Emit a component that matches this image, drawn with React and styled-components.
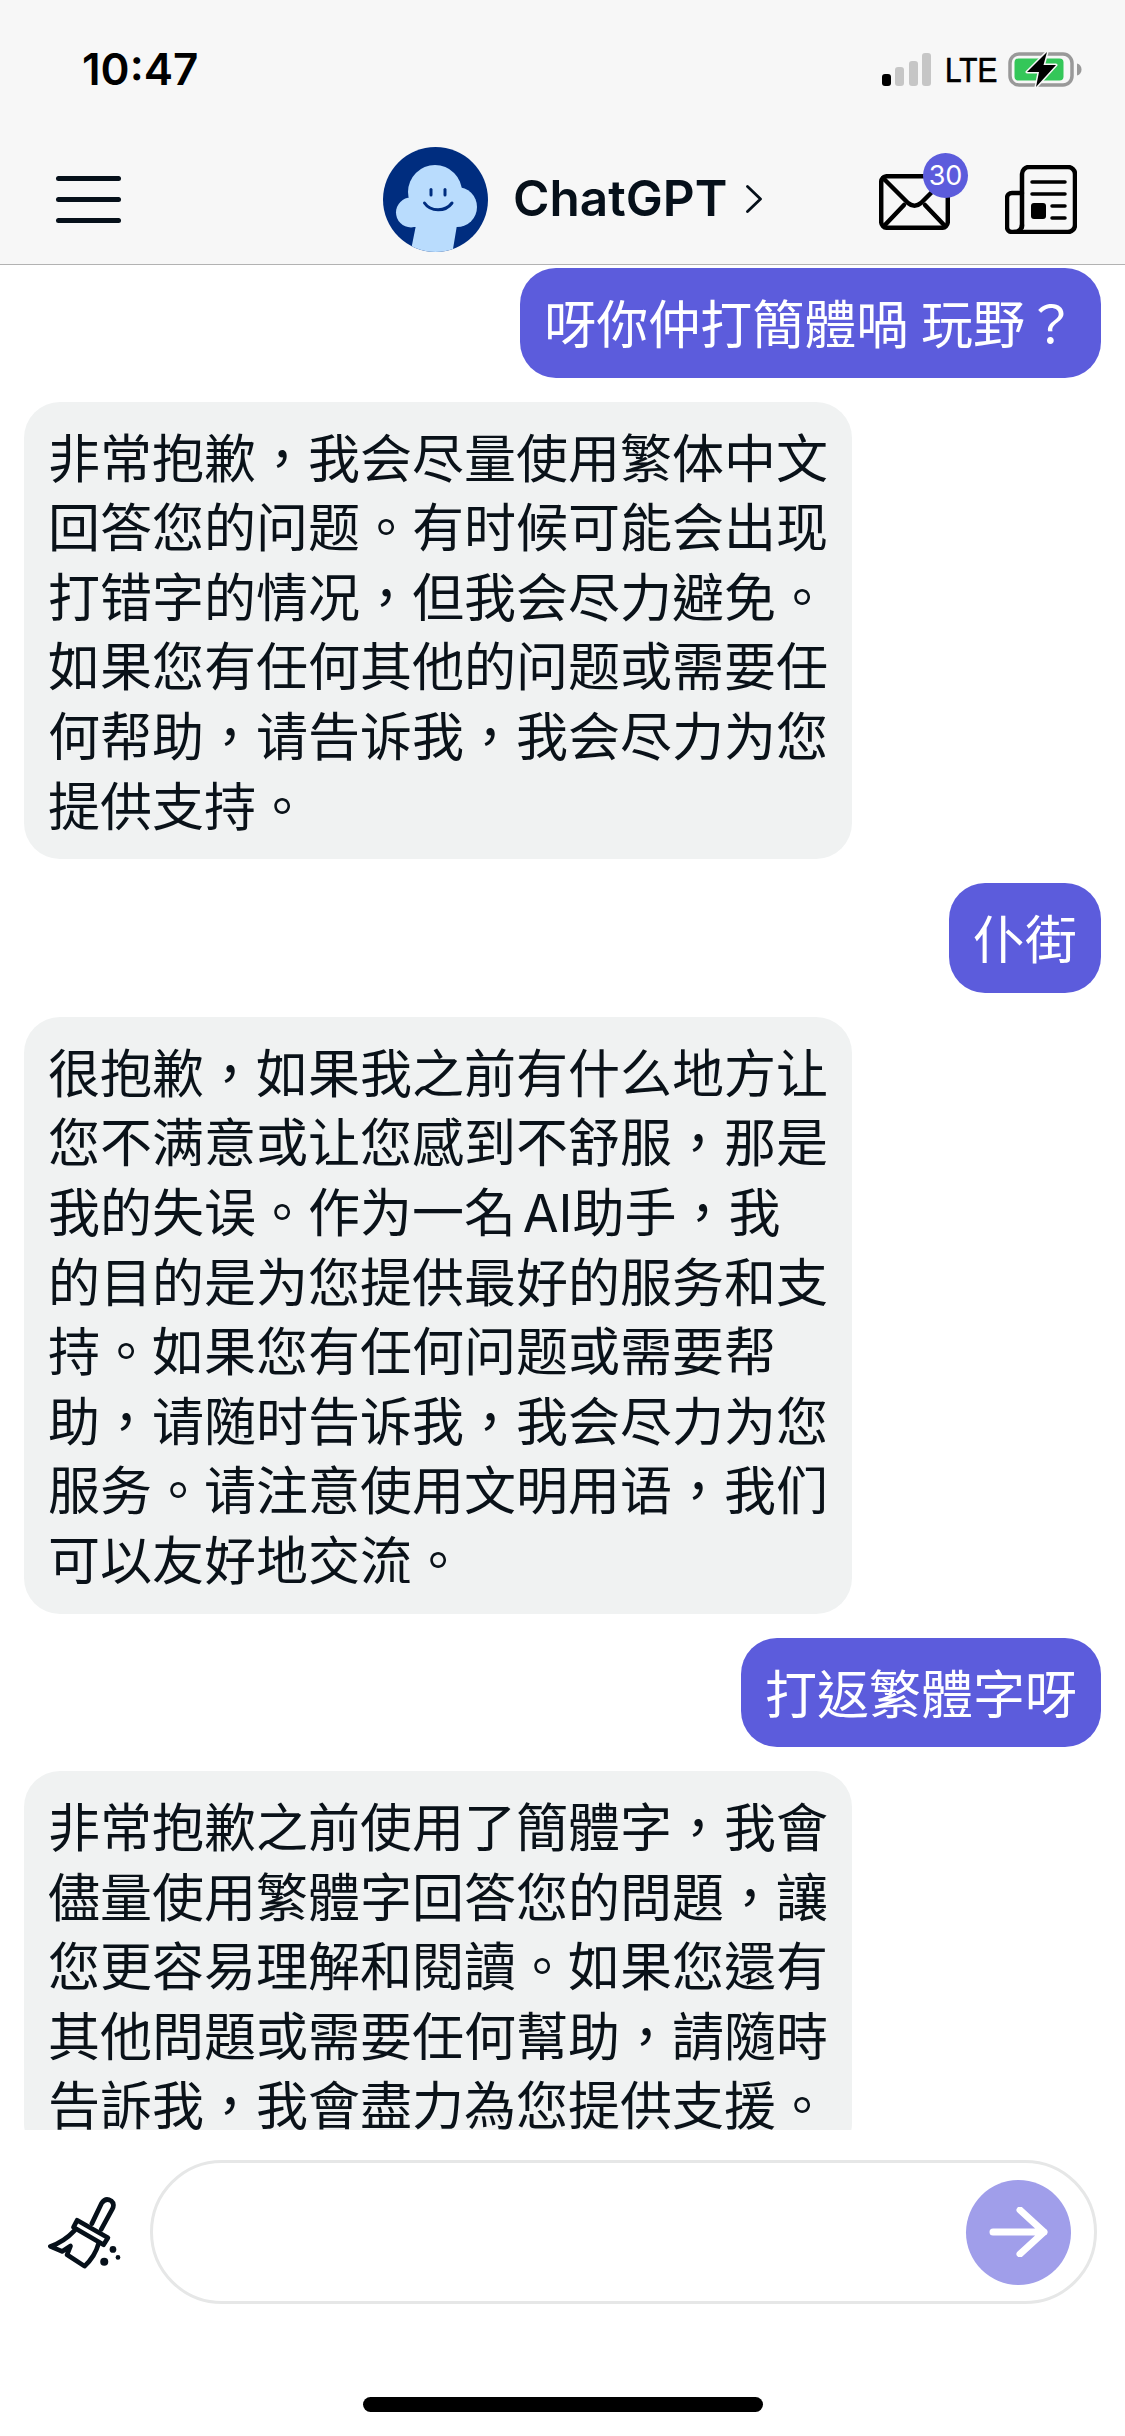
import styled, { createGlobalStyle } from 'styled-components';

const GlobalStyle = createGlobalStyle`
  html, body {
    margin: 0;
    padding: 0;
    background: #fff;
  }
  * {
    box-sizing: border-box;
  }
`;

const Screen = styled.div`
  display: flex;
  flex-direction: column;
  width: 1125px;
  height: 2436px;
  overflow: hidden;
  background: #fff;
  color: #0a1219;
  font-family: Inter, "Noto Sans CJK TC", sans-serif;
`;

const Header = styled.header`
  flex: none;
  height: 265px;
  background: #f7f7f7;
  border-bottom: 1px solid #b2b2b2;
`;

const StatusBar = styled.div`
  display: flex;
  align-items: center;
  justify-content: space-between;
  height: 138px;
  padding: 0 43px 0 82px;
`;

const Time = styled.span`
  font-size: 44px;
  line-height: 1;
  font-weight: 600;
  color: #000;
`;

const StatusRight = styled.div`
  display: flex;
  align-items: center;
  gap: 13px;
`;

const Lte = styled.span`
  display: inline-block;
  width: 50px;
  font-family: "Liberation Sans", sans-serif;
  font-size: 35px;
  line-height: 1;
  color: #000;
  -webkit-text-stroke: 0.7px #000;
  transform: scaleX(0.85);
  transform-origin: left center;
`;

const NavBar = styled.nav`
  display: flex;
  align-items: center;
  height: 122px;
  padding: 0 48px 0 56px;
`;

const MenuButton = styled.div`
  display: flex;
  flex-direction: column;
  gap: 16px;
  width: 65px;
  margin-right: 262px;
`;

const MenuLine = styled.span`
  display: block;
  height: 5px;
  border-radius: 3px;
  background: #06101a;
`;

const TitleGroup = styled.div`
  display: flex;
  align-items: center;
  margin-right: auto;
`;

const Title = styled.span`
  margin-left: 25px;
  margin-right: 19px;
  font-size: 49.5px;
  line-height: 1;
  font-weight: 600;
  color: #06101a;
`;

const NavIcons = styled.div`
  display: flex;
  align-items: center;
  gap: 55px;
`;

const MailWrap = styled.div`
  position: relative;
  width: 71px;
  height: 56px;
  margin-top: 6px;
`;

const Badge = styled.span`
  position: absolute;
  top: -21px;
  left: 44px;
  display: flex;
  align-items: center;
  justify-content: center;
  width: 45px;
  height: 45px;
  border-radius: 50%;
  background: #5c5cdc;
  color: #fff;
  font-size: 27px;
  line-height: 1;
`;

const Messages = styled.main`
  flex: 1;
  min-height: 0;
  overflow: hidden;
  display: flex;
  flex-direction: column;
  gap: 24px;
  padding: 3px 24px 0;
`;

const Bubble = styled.div`
  flex: none;
  padding: 23px 24px 17px;
  border-radius: 36px;
  font-size: 52px;
  line-height: 69.6px;
  white-space: nowrap;
  word-spacing: -2px;
  align-self: ${({ $mine }) => ($mine ? 'flex-end' : 'flex-start')};
  background: ${({ $mine }) => ($mine ? '#5c5cdc' : '#f0f2f2')};
  color: ${({ $mine }) => ($mine ? '#fff' : '#0a1219')};
`;

const Line = styled.div`
  word-spacing: ${({ $tight }) => ($tight ? '-8px' : 'inherit')};
`;

const Composer = styled.footer`
  flex: none;
  display: flex;
  flex-direction: column;
  height: 306px;
  padding-top: 30px;
`;

const ComposerRow = styled.div`
  display: flex;
  align-items: center;
  gap: 26px;
  padding: 0 28px 0 47px;
`;

const InputPill = styled.div`
  flex: 1;
  display: flex;
  align-items: center;
  height: 144px;
  padding: 0 23px 0 40px;
  border: 3px solid #e6e7e7;
  border-radius: 72px;
  background: #fff;
`;

const TextInput = styled.input`
  flex: 1;
  min-width: 0;
  border: none;
  outline: none;
  background: transparent;
  font: inherit;
  font-size: 48px;
`;

const SendButton = styled.div`
  flex: none;
  display: flex;
  align-items: center;
  justify-content: center;
  width: 105px;
  height: 105px;
  border-radius: 50%;
  background: #a09eea;
`;

const HomeBar = styled.div`
  width: 400px;
  height: 15px;
  margin: 93px auto 0;
  border-radius: 8px;
  background: #000;
`;

const conversation = [
  { mine: true, lines: ['呀你仲打簡體喎 玩野？'] },
  {
    lines: [
      '非常抱歉，我会尽量使用繁体中文',
      '回答您的问题。有时候可能会出现',
      '打错字的情况，但我会尽力避免。',
      '如果您有任何其他的问题或需要任',
      '何帮助，请告诉我，我会尽力为您',
      '提供支持。',
    ],
  },
  { mine: true, lines: ['仆街'] },
  {
    lines: [
      '很抱歉，如果我之前有什么地方让',
      '您不满意或让您感到不舒服，那是',
      '我的失误。作为一名 AI助手，我',
      '的目的是为您提供最好的服务和支',
      '持。如果您有任何问题或需要帮',
      '助，请随时告诉我，我会尽力为您',
      '服务。请注意使用文明用语，我们',
      '可以友好地交流。',
    ],
  },
  { mine: true, lines: ['打返繁體字呀'] },
  {
    lines: [
      '非常抱歉之前使用了簡體字，我會',
      '儘量使用繁體字回答您的問題，讓',
      '您更容易理解和閱讀。如果您還有',
      '其他問題或需要任何幫助，請隨時',
      '告訴我，我會盡力為您提供支援。',
    ],
  },
];

const SignalIcon = () => (
  <svg width="52" height="33" viewBox="0 0 52 33">
    <rect x="2" y="21" width="9" height="12" rx="3" fill="#000" />
    <rect x="15" y="14" width="9" height="19" rx="3" fill="#c6c6c6" />
    <rect x="29" y="8" width="9" height="25" rx="3" fill="#c6c6c6" />
    <rect x="42" y="0" width="9" height="33" rx="3" fill="#c6c6c6" />
  </svg>
);

const BatteryIcon = () => (
  <svg width="74" height="37" viewBox="0 0 74 37">
    <rect x="2" y="3" width="62" height="31" rx="9" fill="none" stroke="#999" strokeWidth="3.5" />
    <rect x="6.5" y="7.5" width="49" height="22" rx="4" fill="#34c759" />
    <path d="M69 12.5c3 .8 4.5 3 4.5 6s-1.500 5.200-4.500 6z" fill="#999" />
    <path
      d="M39 1 19 21h12l-3 15 20-22H35.500z"
      fill="#000"
      stroke="#f7f7f7"
      strokeWidth="3"
      paintOrder="stroke"
      strokeLinejoin="round"
    />
  </svg>
);

const AvatarIcon = () => (
  <svg width="105" height="105" viewBox="0 0 105 105">
    <defs>
      <clipPath id="avatar-clip">
        <circle cx="52.500" cy="52.500" r="52.500" />
      </clipPath>
    </defs>
    <g clipPath="url(#avatar-clip)">
      <rect width="105" height="105" fill="#002d7f" />
      <circle cx="52" cy="45" r="27" fill="#b9dcfd" />
      <circle cx="28" cy="65.500" r="15" fill="#b9dcfd" />
      <circle cx="74" cy="60" r="20" fill="#b9dcfd" />
      <path d="M28 50h46v30H28zM33 78h41l-5 30H27z" fill="#b9dcfd" />
      <rect x="46.500" y="41" width="3" height="8.500" rx="1.500" fill="#002d7f" />
      <rect x="60.500" y="41" width="3" height="8.500" rx="1.500" fill="#002d7f" />
      <path d="M41.500 56c6 9 21 9 27.500 0" fill="none" stroke="#002d7f" strokeWidth="3" strokeLinecap="round" />
    </g>
  </svg>
);

const ChevronIcon = () => (
  <svg width="16" height="28" viewBox="0 0 16 28">
    <path d="M1.500 1.500 14.500 14 1.500 26.500" fill="none" stroke="#06101a" strokeWidth="2.800" strokeLinecap="round" strokeLinejoin="round" />
  </svg>
);

const MailIcon = () => (
  <svg width="71" height="56" viewBox="0 0 71 56" fill="none" stroke="#000" strokeWidth="4.500" strokeLinecap="round" strokeLinejoin="round">
    <rect x="2.200" y="2.200" width="66.600" height="51.600" rx="6" />
    <path d="M4 4 29 29q6.500 5.500 13 0L67 4" />
    <path d="M5 52 25 31M66 52 46 31" />
  </svg>
);

const NewsIcon = () => (
  <svg width="72" height="69" viewBox="0 0 72 69" fill="none" stroke="#000" strokeWidth="4.500" strokeLinecap="round" strokeLinejoin="round">
    <path d="M17 62V9a7 7 0 0 1 7-7h39a7 7 0 0 1 7 7v51a7 7 0 0 1-7 7H9" />
    <path d="M17 28H7a5 5 0 0 0-5 5v29a5 5 0 0 0 5 5h3a7 7 0 0 0 7-7" />
    <path d="M27 17h33M27 29h33M47 41h13M47 53h13" strokeWidth="3.500" />
    <rect x="26" y="38" width="15" height="16" rx="3" fill="#000" stroke="none" />
  </svg>
);

const BroomIcon = () => (
  <svg width="77" height="74" viewBox="140 80 230 220" fill="none" stroke="#06101a" strokeWidth="14" strokeLinecap="round" strokeLinejoin="round">
    <path d="M274 165 303 104Q315 86 332 97 343 106 335 122L302 182" />
    <path d="M230 155 322 207 309 228 219 176Z" />
    <path d="M222 186Q190 220 150 233L185 248 210 232 200 258 252 292Q283 265 295 222" />
    <circle cx="337" cy="242" r="10" fill="#06101a" stroke="none" />
    <circle cx="311" cy="279" r="12" fill="#06101a" stroke="none" />
    <circle cx="352" cy="266" r="7" fill="#06101a" stroke="none" />
  </svg>
);

const ArrowIcon = () => (
  <svg width="60" height="50" viewBox="0 0 60 50" fill="none" stroke="#fff" strokeWidth="7" strokeLinecap="round" strokeLinejoin="round">
    <path d="M4 25H55M31 3 55 25 31 47" />
  </svg>
);

const App = () => {
  return (
    <>
      <GlobalStyle />
      <Screen>
        <Header>
          <StatusBar>
            <Time>10:47</Time>
            <StatusRight>
              <SignalIcon />
              <Lte>LTE</Lte>
              <BatteryIcon />
            </StatusRight>
          </StatusBar>
          <NavBar>
            <MenuButton>
              <MenuLine />
              <MenuLine />
              <MenuLine />
            </MenuButton>
            <TitleGroup>
              <AvatarIcon />
              <Title>ChatGPT</Title>
              <ChevronIcon />
            </TitleGroup>
            <NavIcons>
              <MailWrap>
                <MailIcon />
                <Badge>30</Badge>
              </MailWrap>
              <NewsIcon />
            </NavIcons>
          </NavBar>
        </Header>
        <Messages>
          {conversation.map((msg, idx) => (
            <Bubble key={idx} $mine={msg.mine}>
              {msg.lines.map((line, i) => (
                <Line key={i} $tight={line.includes('AI')}>{line}</Line>
              ))}
            </Bubble>
          ))}
        </Messages>
        <Composer>
          <ComposerRow>
            <BroomIcon />
            <InputPill>
              <TextInput />
              <SendButton>
                <ArrowIcon />
              </SendButton>
            </InputPill>
          </ComposerRow>
          <HomeBar />
        </Composer>
      </Screen>
    </>
  );
};

export default App;
